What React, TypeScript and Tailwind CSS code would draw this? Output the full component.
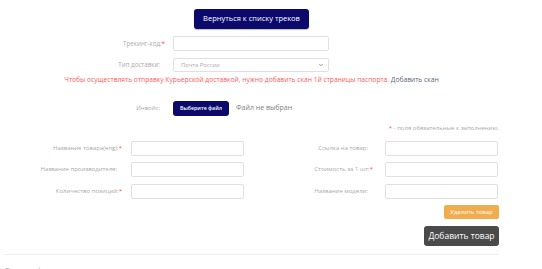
import { ChevronDown } from "lucide-react";

const Req = () => <span className="-mr-[5px] text-[#ff5050]">*</span>;

type Field = { label: string; required?: boolean };

const leftFields: Field[] = [
  { label: "Название товара(eng):", required: true },
  { label: "Название производителя:" },
  { label: "Количество позиций:", required: true },
];

const rightFields: Field[] = [
  { label: "Ссылка на товар:" },
  { label: "Стоимость за 1 шт:", required: true },
  { label: "Название модели:" },
];

const rowGaps = ["mt-[9px]", "mt-[6px]", "mt-[7px]"];

const TextInput = ({ className }: { className: string }) => (
  <input
    type="text"
    className={`h-[15px] rounded-[2px] border border-[#e0e0e0] bg-white outline-none ${className}`}
  />
);

export default function App() {
  return (
    <div className="h-[269px] w-[542px] overflow-hidden bg-white font-['Open_Sans',sans-serif] text-[#aaaaaa]">
      <div className="ml-[4px] w-[495px] pt-[9px]">
        <div className="flex justify-center">
          <button className="h-[20px] w-[115px] rounded-[3px] bg-[#0b0a6c] text-[7.5px] text-white shadow-[0_1px_1px_rgba(0,0,0,0.25)]">
            Вернуться к списку треков
          </button>
        </div>

        <div className="mt-[7px] flex h-[15px] items-center">
          <label className="w-[156px] text-right text-[6.2px]">
            Трекинг-код:
            <Req />
          </label>
          <TextInput className="ml-[13px] w-[156px]" />
        </div>

        <div className="mt-[7px] flex h-[14px] items-center">
          <label className="w-[156px] text-right text-[6.2px]">Тип доставки:</label>
          <div className="ml-[13px] flex h-[14px] w-[156px] items-center justify-between rounded-[2px] border border-[#e0e0e0] bg-white pl-[7px] pr-[4px] text-[5.8px]">
            <span>Почта России</span>
            <ChevronDown className="h-[6px] w-[6px] text-[#777]" strokeWidth={3} />
          </div>
        </div>

        <p className="mt-[3px] h-[10px] text-center text-[6.7px] leading-[10px] text-[#ff5a5a]">
          Чтобы осуществлять отправку Курьерской доставкой, нужно добавить скан 1й страницы паспорта.{" "}
          <a className="text-[#5c5f80]">Добавить скан</a>
        </p>

        <div className="mt-[16px] flex h-[15px] items-center">
          <label className="w-[156px] text-right text-[6px]">Инвойс:</label>
          <button className="ml-[13px] h-[15px] w-[56px] rounded-[3px] bg-[#0b0a6c] text-[5.3px] font-semibold text-white">
            Выберите файл
          </button>
          <span className="ml-[7px] text-[7px] text-[#808080]">Файл не выбран</span>
        </div>

        <p className="mt-[8px] h-[8px] text-right text-[6px] leading-[8px]">
          <span className="text-[#ff5050]">*</span> - поля обязательные к заполнению.
        </p>

        {leftFields.map((left, i) => {
          const right = rightFields[i];
          return (
            <div key={left.label} className={`${rowGaps[i]} flex h-[15px] items-center`}>
              <label className="w-[113px] shrink-0 whitespace-nowrap text-right text-[6px]">
                {left.label}
                {left.required && <Req />}
              </label>
              <TextInput className="ml-[14px] w-[113px] shrink-0" />
              <label className="w-[124px] shrink-0 whitespace-nowrap text-right text-[6px]">
                {right.label}
                {right.required && <Req />}
              </label>
              <TextInput className="ml-[17px] w-[113px] shrink-0" />
            </div>
          );
        })}

        <div className="mt-[6px] flex justify-end">
          <button className="h-[14px] w-[55px] rounded-[2px] bg-[#f0ad4e] text-[6px] text-white">
            Удалить товар
          </button>
        </div>

        <div className="mt-[7px] flex justify-end">
          <button className="h-[20px] w-[75px] rounded-[3px] bg-[#4a4a4a] text-[8.5px] text-white">
            Добавить товар
          </button>
        </div>

        <hr className="mt-[8px] border-t border-[#eeeeee]" />

        <p className="mt-[10px] text-[8px] leading-[10px] text-[#aaa]">Фотографии товара</p>
      </div>
    </div>
  );
}
